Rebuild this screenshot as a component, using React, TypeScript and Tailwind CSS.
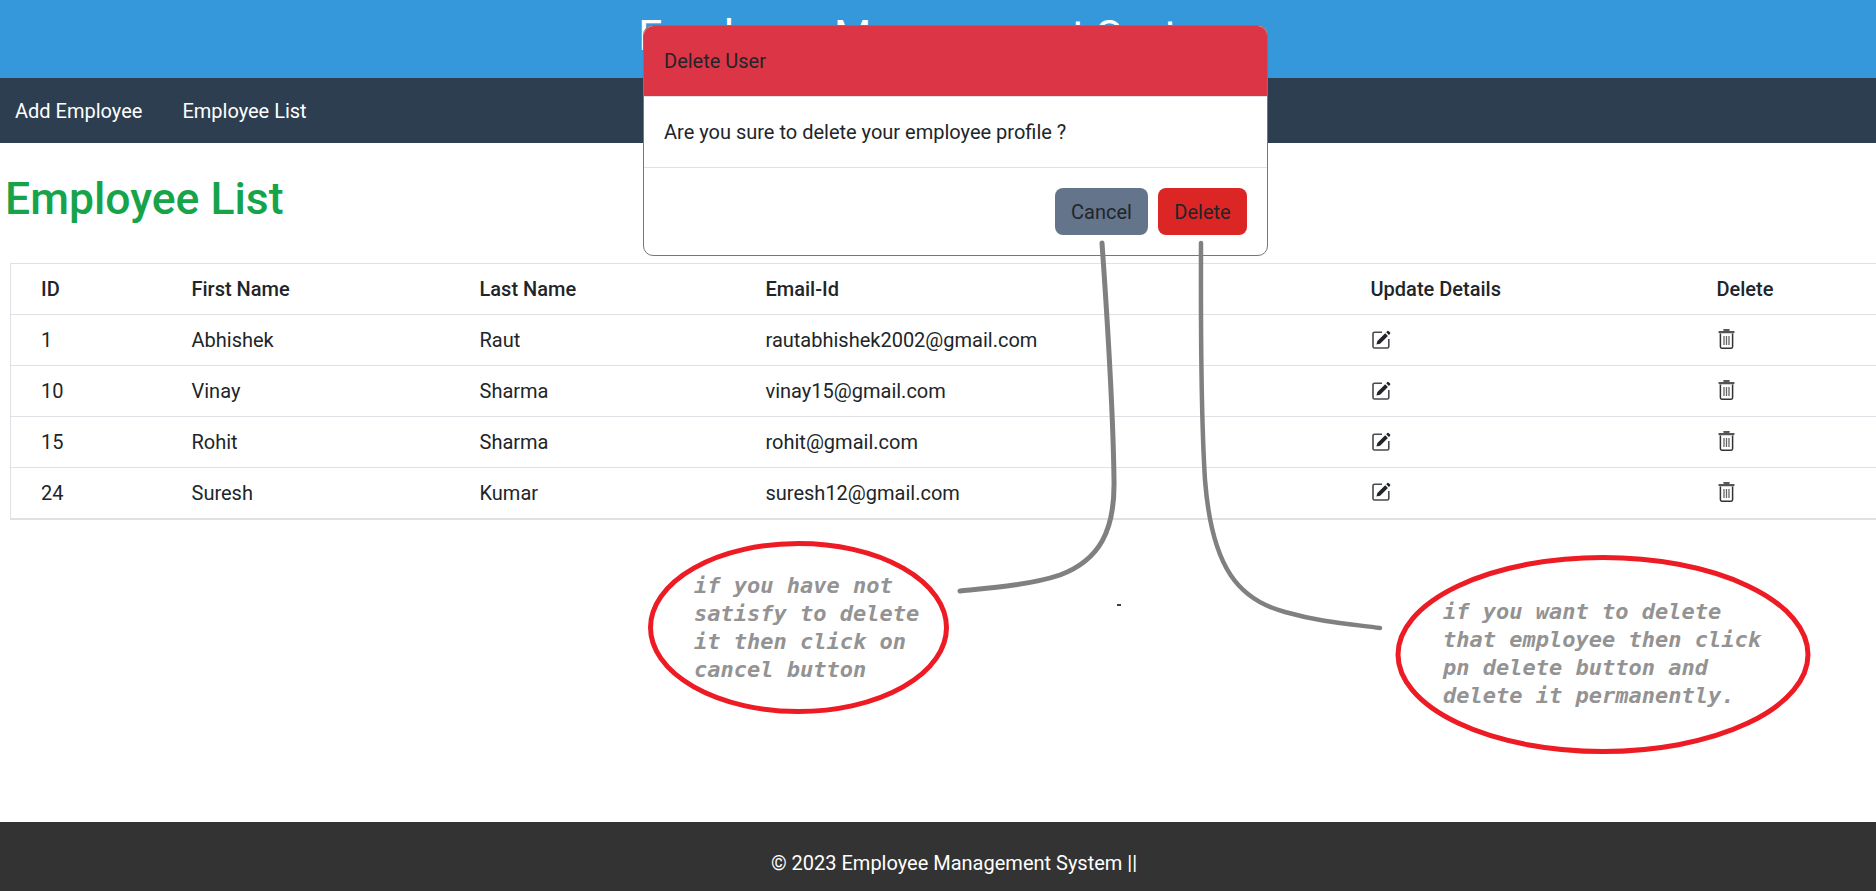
import React from "react";

type Employee = {
  id: number;
  firstName: string;
  lastName: string;
  email: string;
};

const employees: Employee[] = [
  { id: 1, firstName: "Abhishek", lastName: "Raut", email: "rautabhishek2002@gmail.com" },
  { id: 10, firstName: "Vinay", lastName: "Sharma", email: "vinay15@gmail.com" },
  { id: 15, firstName: "Rohit", lastName: "Sharma", email: "rohit@gmail.com" },
  { id: 24, firstName: "Suresh", lastName: "Kumar", email: "suresh12@gmail.com" },
];

function EditIcon() {
  return (
    <svg width="19" height="19" viewBox="0 0 19 19" className="block ml-px -translate-y-px">
      <path d="M10 2.2H2.6A1.6 1.6 0 0 0 1 3.8v12.6A1.6 1.6 0 0 0 2.6 18h12.6a1.6 1.6 0 0 0 1.6-1.6V9" fill="none" stroke="#4a4a4a" strokeWidth="1.6" />
      <path d="M4.4 14.6l1-3.6L13.2 3.2l2.7 2.7-7.8 7.8z" fill="#212529" />
      <path d="M14.2 2.2l1.2-1.2a.8.8 0 0 1 1.1 0l1.6 1.6a.8.8 0 0 1 0 1.1l-1.2 1.2z" fill="#212529" />
    </svg>
  );
}

function TrashIcon() {
  return (
    <svg width="17" height="20" viewBox="0 0 17 20" className="block ml-px -translate-y-px">
      <path d="M6 1.6V1h5v.6" fill="none" stroke="#212529" strokeWidth="1.4" />
      <rect x="0.5" y="2" width="16" height="2.2" rx="0.6" fill="#555" />
      <path d="M2.4 4.4v13.4c0 .9.6 1.4 1.4 1.4h9.4c.8 0 1.4-.5 1.4-1.4V4.4" fill="none" stroke="#333" strokeWidth="1.5" />
      <path d="M6 7v9M8.5 7v9M11 7v9" fill="none" stroke="#666" strokeWidth="1.3" />
    </svg>
  );
}

function Annotations() {
  return (
    <div className="absolute inset-0 pointer-events-none">
      <svg width="1876" height="891" viewBox="0 0 1876 891" className="absolute left-0 top-0">
        <path d="M1102 243C1106 300 1113 400 1114 480C1115 530 1100 560 1060 575C1030 585 990 588 960 591" fill="none" stroke="#808080" strokeWidth="5" strokeLinecap="round" />
        <path d="M1201 243C1201 300 1200 400 1205 480C1212 570 1240 600 1285 612C1320 622 1350 624 1380 628" fill="none" stroke="#808080" strokeWidth="4.5" strokeLinecap="round" />
        <ellipse cx="798.5" cy="627.5" rx="148" ry="84" fill="none" stroke="#ed1c24" strokeWidth="5" />
        <ellipse cx="1603" cy="654.5" rx="205" ry="97" fill="none" stroke="#ed1c24" strokeWidth="5" />
        <path d="M1117 605h4" stroke="#000" strokeWidth="1.5" />
      </svg>
      <div className="absolute left-[694px] top-[572px] whitespace-pre font-['DejaVu_Sans_Mono',monospace] text-[22px] leading-[28px] italic font-bold text-[#939393]">
        {"if you have not\nsatisfy to delete\nit then click on\ncancel button"}
      </div>
      <div className="absolute left-[1443px] top-[598px] whitespace-pre font-['DejaVu_Sans_Mono',monospace] text-[22px] leading-[28px] italic font-bold text-[#939393]">
        {"if you want to delete\nthat employee then click\npn delete button and\ndelete it permanently."}
      </div>
    </div>
  );
}

function DeleteModal() {
  return (
    <div className="absolute left-[643px] top-[25px] w-[625px] rounded-[10px] border border-[#777] bg-white text-[20px] text-[#212529] overflow-hidden">
      <div className="h-[71px] flex items-center px-5 bg-[#dc3545] border-b border-[#dee2e6]">Delete User</div>
      <div className="h-[71px] flex items-center px-5 border-b border-[#dee2e6]">Are you sure to delete your employee profile ?</div>
      <div className="h-[87px] flex justify-end items-start gap-[10px] pt-5 px-5">
        <button className="h-[47px] w-[93px] rounded-lg bg-[#64748b]">Cancel</button>
        <button className="h-[47px] w-[89px] rounded-lg bg-[#dc2626]">Delete</button>
      </div>
    </div>
  );
}

export default function App() {
  return (
    <div className="relative h-[891px] overflow-hidden flex flex-col bg-white font-['Roboto',sans-serif] text-[20px] text-[#212529]">
      <header className="h-[78px] shrink-0 bg-[#3498db] text-center text-white text-[42.7px] leading-[54px] pt-[8px]">
        Employee Management System
      </header>
      <nav className="h-[65px] shrink-0 flex items-center gap-10 px-[15px] bg-[#2c3e50] text-white">
        <a>Add Employee</a>
        <a>Employee List</a>
      </nav>
      <main className="flex-1 pl-[10px]">
        <h1 className="mt-[25px] mb-[32px] -ml-[5px] text-[44.5px] leading-[63px] font-medium text-[#16a34a]">Employee List</h1>
        <table className="table-fixed border-collapse w-[1875px]">
          <colgroup>
            <col className="w-[151px]" />
            <col className="w-[288px]" />
            <col className="w-[286px]" />
            <col className="w-[605px]" />
            <col className="w-[346px]" />
            <col className="w-[199px]" />
          </colgroup>
          <thead>
            <tr className="h-[51px] border border-[#dee2e6] text-left">
              <th className="pl-[30px] font-medium">ID</th>
              <th className="pl-[30px] font-medium">First Name</th>
              <th className="pl-[30px] font-medium">Last Name</th>
              <th className="pl-[30px] font-medium">Email-Id</th>
              <th className="pl-[30px] font-medium">Update Details</th>
              <th className="pl-[30px] font-medium">Delete</th>
            </tr>
          </thead>
          <tbody className="border-b-2 border-[#dee2e6]">
            {employees.map((emp) => (
              <tr key={emp.id} className="h-[51px] border border-[#dee2e6]">
                <td className="pl-[30px]">{emp.id}</td>
                <td className="pl-[30px]">{emp.firstName}</td>
                <td className="pl-[30px]">{emp.lastName}</td>
                <td className="pl-[30px]">{emp.email}</td>
                <td className="pl-[30px]"><EditIcon /></td>
                <td className="pl-[30px]"><TrashIcon /></td>
              </tr>
            ))}
          </tbody>
        </table>
      </main>
      <footer className="h-[69px] shrink-0 flex items-center justify-center pt-3 pl-8 bg-[#333] text-white">
        © 2023 Employee Management System ||
      </footer>
      <DeleteModal />
      <Annotations />
    </div>
  );
}
